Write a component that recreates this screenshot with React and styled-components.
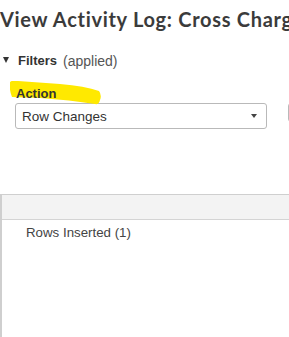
import React from "react";
import styled, { createGlobalStyle } from "styled-components";

const Global = createGlobalStyle`
  html, body { margin: 0; padding: 0; background: #fff; }
  body { font-family: "Liberation Sans", Arial, sans-serif; color: #333; overflow: hidden; }
`;

const Page = styled.div`
  width: 289px;
  height: 337px;
  overflow: hidden;
  display: flex;
  flex-direction: column;
`;

const Title = styled.h1`
  margin: 7px 0 0 0;
  font-family: "Lato", sans-serif;
  font-weight: 700;
  font-size: 20px;
  line-height: 24px;
  color: #3b3b3b;
  white-space: nowrap;
  letter-spacing: 0.7px;
`;

const FiltersToggle = styled.div`
  margin-top: 22px;
  padding-left: 3px;
  display: flex;
  align-items: center;
  font-size: 13px;
  line-height: 16px;
  color: #333;
`;

const Caret = styled.span`
  width: 0;
  height: 0;
  border-left: 3.5px solid transparent;
  border-right: 3.5px solid transparent;
  border-top: 6px solid #333;
  margin: -3px 9px 0 0;
`;

const Bold = styled.b`
  font-weight: 700;
`;

const Muted = styled.span`
  color: #555;
  font-size: 14px;
  margin-left: 6px;
`;

const FilterRow = styled.div`
  margin-top: 15px;
  padding-left: 15px;
  display: flex;
  gap: 21px;
  align-items: flex-start;
`;

const Field = styled.div`
  display: flex;
  flex-direction: column;
  flex: 0 0 ${(p) => p.$width}px;
`;

const LabelWrap = styled.div`
  position: relative;
  height: 19px;
  display: flex;
  align-items: center;
`;

const Highlight = styled.svg`
  position: absolute;
  left: -5px;
  top: -3px;
  width: 91px;
  height: 24px;
`;

const Label = styled.label`
  position: relative;
  padding-left: 1px;
  font-size: 13px;
  font-weight: 700;
  color: #333;
`;

const Select = styled.div`
  height: ${(p) => p.$h}px;
  border: 1px solid #b9b9b9;
  border-radius: 3px;
  display: flex;
  align-items: center;
  justify-content: space-between;
  padding: 0 9px 0 6px;
  font-size: 13.5px;
  color: #333;
  background: #fff;
`;

const Arrow = styled.span`
  width: 0;
  height: 0;
  border-left: 3.5px solid transparent;
  border-right: 3.5px solid transparent;
  border-top: 4px solid #444;
`;

const Table = styled.div`
  margin-top: 65px;
  flex: 1;
  border-top: 1px solid #cfcfcf;
  border-left: 2px solid #cfcfcf;
  display: flex;
  flex-direction: column;
`;

const HeaderBand = styled.div`
  height: 24px;
  background: #f3f3f3;
  border-bottom: 1px solid #d4d4d4;
`;

const Cell = styled.div`
  padding: 5px 0 0 24px;
  font-size: 13.3px;
  line-height: 16px;
  color: #444;
`;

export default function App() {
  return (
    <Page>
      <Global />
      <Title>View Activity Log: Cross Charges</Title>
      <FiltersToggle>
        <Caret />
        <Bold>Filters</Bold>
        <Muted>(applied)</Muted>
      </FiltersToggle>
      <FilterRow>
        <Field $width={252}>
          <LabelWrap>
            <Highlight viewBox="0 0 91 24" preserveAspectRatio="none">
              <path
                d="M0 1 Q2 -1 8 0 L50 3 Q75 5 89 10 Q92 14 90 19 Q89 24 85 23 Q60 19 30 17 Q8 16 2 16 Q-1 9 0 1 Z"
                fill="#ffe900"
              />
            </Highlight>
            <Label>Action</Label>
          </LabelWrap>
          <Select $h={24}>
            <span>Row Changes</span>
            <Arrow />
          </Select>
        </Field>
        <Field $width={120}>
          <LabelWrap>
            <Label>User</Label>
          </LabelWrap>
          <Select $h={17}>
            <span>All</span>
            <Arrow />
          </Select>
        </Field>
      </FilterRow>
      <Table>
        <HeaderBand />
        <Cell>Rows Inserted (1)</Cell>
      </Table>
    </Page>
  );
}
